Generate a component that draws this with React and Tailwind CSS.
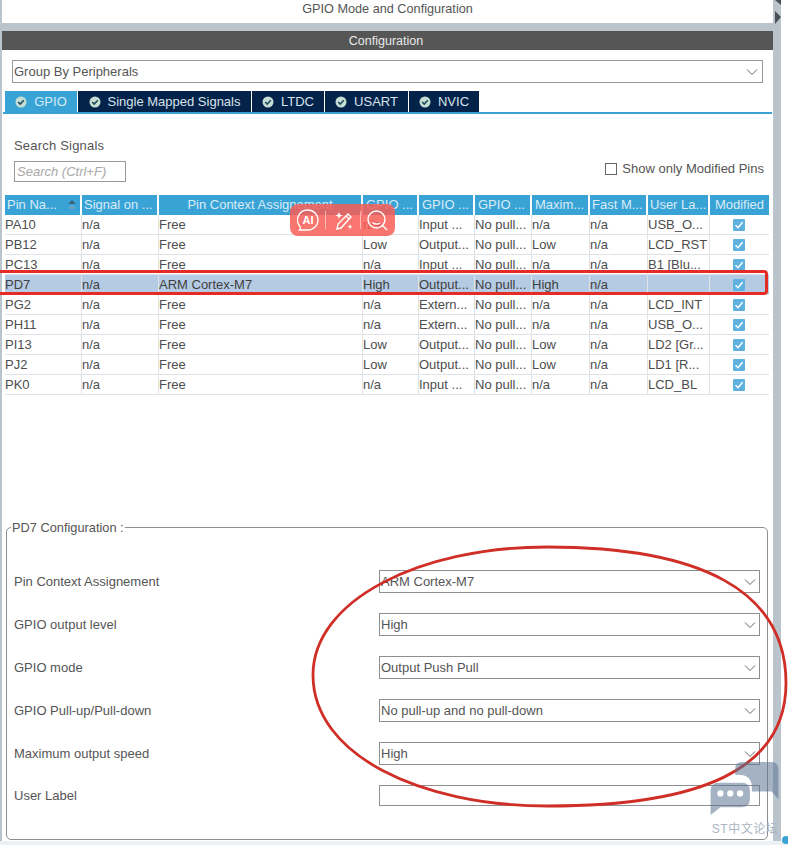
import React from "react";

const FONT = "font-['Liberation_Sans',Arial,sans-serif]";
const COLS = "grid-cols-[77px_77px_204px_56px_56px_57px_58px_58px_62px_59px]";

const rows = [
  ["PA10", "n/a", "Free", "n/a", "Input ...", "No pull...", "n/a", "n/a", "USB_O..."],
  ["PB12", "n/a", "Free", "Low", "Output...", "No pull...", "Low", "n/a", "LCD_RST"],
  ["PC13", "n/a", "Free", "n/a", "Input ...", "No pull...", "n/a", "n/a", "B1 [Blu..."],
  ["PD7", "n/a", "ARM Cortex-M7", "High", "Output...", "No pull...", "High", "n/a", ""],
  ["PG2", "n/a", "Free", "n/a", "Extern...", "No pull...", "n/a", "n/a", "LCD_INT"],
  ["PH11", "n/a", "Free", "n/a", "Extern...", "No pull...", "n/a", "n/a", "USB_O..."],
  ["PI13", "n/a", "Free", "Low", "Output...", "No pull...", "Low", "n/a", "LD2 [Gr..."],
  ["PJ2", "n/a", "Free", "Low", "Output...", "No pull...", "Low", "n/a", "LD1 [R..."],
  ["PK0", "n/a", "Free", "n/a", "Input ...", "No pull...", "n/a", "n/a", "LCD_BL"],
];

const headers = ["Signal on ...", "Pin Context Assignement", "GPIO ...", "GPIO ...", "GPIO ...", "Maxim...", "Fast M...", "User La...", "Modified"];

function Chevron() {
  return (
    <svg width="12" height="8" viewBox="0 0 12 8" className="shrink-0" fill="none">
      <path d="M1 1.5 L6 6.5 L11 1.5" stroke="#666" strokeWidth="1" />
    </svg>
  );
}

function TabCheck() {
  return (
    <svg width="12" height="12" viewBox="0 0 12 12" className="shrink-0">
      <circle cx="6" cy="6" r="5.5" fill="#c5ddd2" />
      <path d="M3.2 6 L5.2 8 L8.8 4.2" stroke="#1c4a5c" strokeWidth="1.6" fill="none" />
    </svg>
  );
}

function Tab({ label, active, width }) {
  return (
    <div className={`h-[21px] flex items-center justify-center gap-[7px] ${width} ${active ? "bg-[#3aa3d6] text-[#d5ebf7]" : "bg-[#03234b] text-[#d8e2ea]"}`}>
      <TabCheck />
      <span>{label}</span>
    </div>
  );
}

function Box() {
  return (
    <svg width="12" height="12" viewBox="0 0 12 12" className="shrink-0">
      <rect width="12" height="12" rx="1" fill="#5fb2e0" />
      <path d="M2.5 6.2 L5 8.7 L9.6 3.2" stroke="#fff" strokeWidth="1.5" fill="none" />
    </svg>
  );
}

function FieldRow({ label, value, input }) {
  return (
    <div className={`h-[23px] flex items-center justify-between ${input ? "-mt-[1px]" : ""}`}>
      <span className="pl-[7px]">{label}</span>
      <div className={`w-[381px] border border-[#8f8f8f] flex items-center justify-between pl-[1px] pr-[3px] ${input ? "h-[21px]" : "h-[23px]"}`}>
        <span>{value}</span>
        {!input && <Chevron />}
      </div>
    </div>
  );
}

export default function App() {
  return (
    <div className={`${FONT} relative w-[788px] h-[845px] overflow-hidden bg-white text-[13px] text-[#555]`}>
      <div className="flex h-[841px]">
        <div className="w-[781px] bg-[#b9c4cc] pl-[2px] pr-[8px] flex flex-col">
          <div className="h-[23px] bg-white flex items-start justify-center pt-[1px] text-[12.7px] leading-[16px] text-[#555]">GPIO Mode and Configuration</div>
          <div className="h-[8px]" />
          <div className="h-[19px] bg-[#555655] text-[#e9e9e9] flex items-center justify-center pt-[1px] pr-[3px] text-[12.5px]">Configuration</div>
          <div className="flex-1 bg-white flex flex-col">
            {/* group select */}
            <div className="pt-[10px] pl-[10px] pr-[10px]">
              <div className="h-[23px] border border-[#999] flex items-center justify-between pl-[1px] pr-[4px]">
                <span>Group By Peripherals</span>
                <Chevron />
              </div>
            </div>
            {/* tabs */}
            <div className="mt-[8px] ml-[1px] mr-[1px] border-b-[2px] border-[#3aa3d6] pl-[2px] flex gap-[1px]">
              <Tab label="GPIO" active width="w-[72px]" />
              <Tab label="Single Mapped Signals" width="w-[173px]" />
              <Tab label="LTDC" width="w-[72px]" />
              <Tab label="USART" width="w-[83px]" />
              <Tab label="NVIC" width="w-[70px]" />
            </div>
            {/* search */}
            <div className="h-[81px] pl-[12px] pr-[9px] pt-[24px] flex justify-between">
              <div className="flex flex-col">
                <span className="h-[16px] leading-[16px] tracking-[0.2px]">Search Signals</span>
                <div className="mt-[7px] w-[112px] h-[21px] border border-[#999] pl-[2px] flex items-center italic text-[#a8a8a8]">Search (Ctrl+F)</div>
              </div>
              <div className="self-start mt-[21px] flex items-center gap-[5px]">
                <span className="w-[12px] h-[12px] border border-[#666] bg-white" />
                <span>Show only Modified Pins</span>
              </div>
            </div>
            {/* table */}
            <div className="pl-[3px] text-[#4d4d4d]">
              <div className={`grid ${COLS} h-[19px] mb-[1px] w-[764px]`}>
                <div className="bg-[#3aa3d6] text-[#d8ecf7] border-r-[2px] border-white pl-[2px] pr-[4px] flex items-center justify-between">
                  <span>Pin Na...</span>
                  <svg width="8" height="10" viewBox="0 0 8 10"><path d="M4 0 L8 4 L0 4Z" fill="#3c6680" /><path d="M4 10 L8 6 L0 6Z" fill="#6fa3c0" /></svg>
                </div>
                {headers.map((h, i) => (
                  <div key={i} className={`bg-[#3aa3d6] text-[#d8ecf7] flex items-center overflow-hidden whitespace-nowrap ${i === 8 ? "justify-center" : "border-r-[2px] border-white"} ${i === 1 ? "justify-center" : i === 8 ? "" : i >= 2 && i <= 5 ? "pl-[3px]" : "pl-[2px]"}`}>{h}</div>
                ))}
              </div>
              {rows.map((r, i) => (
                <div key={r[0]} className={`grid ${COLS} h-[20px] w-[764px] border-b border-[#dfe3e6] ${i === 3 ? "bg-[#b5cbe3] text-[#3f3f3f]" : ""}`}>
                  {r.map((c, j) => (
                    <div key={j} className={`flex items-center border-r border-[#dfe3e6] whitespace-nowrap overflow-hidden ${i === 3 ? "border-[#c6d6e8]" : ""}`}>{c}</div>
                  ))}
                  <div className="flex items-center justify-center pr-[2px]"><Box /></div>
                </div>
              ))}
            </div>
            {/* fieldset */}
            <fieldset className="mt-[125px] ml-[4px] w-[762px] h-[320px] border border-[#8f8f8f] rounded-[5px] pr-[7px] min-w-0">
              <legend className="ml-[4px] px-[1px] h-[14px] leading-[16px] text-[12.8px]">PD7 Configuration :</legend>
              <div className="flex flex-col gap-[20px] pt-[36px]">
                <FieldRow label="Pin Context Assignement" value="ARM Cortex-M7" />
                <FieldRow label="GPIO output level" value="High" />
                <FieldRow label="GPIO mode" value="Output Push Pull" />
                <FieldRow label="GPIO Pull-up/Pull-down" value="No pull-up and no pull-down" />
                <FieldRow label="Maximum output speed" value="High" />
                <FieldRow label="User Label" value="" input />
              </div>
            </fieldset>
          </div>
        </div>
      </div>
      <div className="h-[4px] bg-[#edf1f3]" />

      {/* splitter arrows */}
      <svg className="absolute left-[774px] top-0" width="8" height="26" viewBox="0 0 8 26">
        <path d="M1 0 L7 5 L7 0Z" fill="#4a4f55" />
        <path d="M1 11 L7 17 L1 24Z" fill="#4a4f55" />
      </svg>

      {/* selected-row annotation */}
      <div className="absolute left-[-4px] top-[270px] w-[772px] h-[25px] border-[3px] border-[#e42b25] rounded-[4px]" />

      {/* ellipse annotation */}
      <svg className="absolute left-0 top-0 pointer-events-none" width="788" height="845" viewBox="0 0 788 845" fill="none">
        <path d="M547 547 C700 547 786 590 786 683 C786 770 700 806 548 806 C420 806 313 755 313 675 C313 600 420 547 547 547Z" stroke="#cf2f27" strokeWidth="2.8" />
      </svg>

      {/* floating AI toolbar */}
      <div className="absolute left-[290px] top-[204px] w-[105px] h-[32px] rounded-[8px] bg-[#f85d56]/85 flex items-center pl-[7px] text-white">
        <svg width="22" height="22" viewBox="0 0 22 22" fill="none" stroke="#fff" strokeWidth="1.3">
          <path d="M11 1 A10 10 0 1 1 11 21 L2.5 21 C3.8 19.6 3.6 18.6 3 17.6 A10 10 0 0 1 11 1Z" />
          <text x="11" y="15" textAnchor="middle" fontSize="11" fontWeight="700" fill="#fff" stroke="none" fontFamily="Liberation Sans">AI</text>
        </svg>
        <span className="ml-[6px] w-px h-[18px] bg-white/50" />
        <svg className="ml-[7px]" width="22" height="22" viewBox="0 0 22 22" fill="none" stroke="#fff" strokeWidth="1.4">
          <path d="M15 5 L18 8 L8 19 L4 20 L5 15Z" />
          <path d="M13 7 L16 10" />
          <path d="M6 3 L7 5.5 L9.5 6.5 L7 7.5 L6 10 L5 7.5 L2.5 6.5 L5 5.5Z" fill="#fff" stroke="none" />
          <path d="M17 15 L17.7 17 L19.7 17.7 L17.7 18.4 L17 20.4 L16.3 18.4 L14.3 17.7 L16.3 17Z" fill="#fff" stroke="none" />
        </svg>
        <span className="ml-[5px] w-px h-[18px] bg-white/50" />
        <svg className="ml-[5px]" width="23" height="23" viewBox="0 0 23 23" fill="none" stroke="#fff" strokeWidth="1.4">
          <circle cx="10.5" cy="10.5" r="8.5" />
          <path d="M16.5 16.5 L21 21" />
          <path d="M6.5 13.5 C8 15.5 12 15.5 14 14" />
        </svg>
      </div>

      {/* forum watermark */}
      <div className="absolute left-[708px] top-[762px] w-[74px] h-[76px] flex flex-col items-center">
        <svg width="74" height="56" viewBox="0 0 74 56">
          <path d="M27 7 Q27 0 34 0 L64 0 Q71 0 71 8 L71 38 L64 30 L44 30 L44 26 Q44 13 30 13 L27 13Z" fill="#5b7391" fillOpacity="0.55" />
          <path d="M2 29 Q2 21 10 21 L34 21 Q42 21 42 29 L42 38 Q42 46 34 46 L12 46 L2 54Z" fill="#5b7391" fillOpacity="0.55" />
          <circle cx="12" cy="32" r="3.2" fill="#fff" />
          <circle cx="22" cy="32" r="3.2" fill="#fff" />
          <circle cx="32" cy="32" r="3.2" fill="#fff" />
        </svg>
        <span className="text-[12px] mt-[3px] tracking-[0.5px] whitespace-nowrap text-[#aab6c4] font-['Liberation_Sans','Noto_Sans_CJK_SC',sans-serif]">ST中文论坛</span>
      </div>

      {/* bottom-right handle */}
      <div className="absolute left-[782px] top-[836px] w-[8px] h-[8px] rounded-full bg-[#3aa3d6]" />
    </div>
  );
}
